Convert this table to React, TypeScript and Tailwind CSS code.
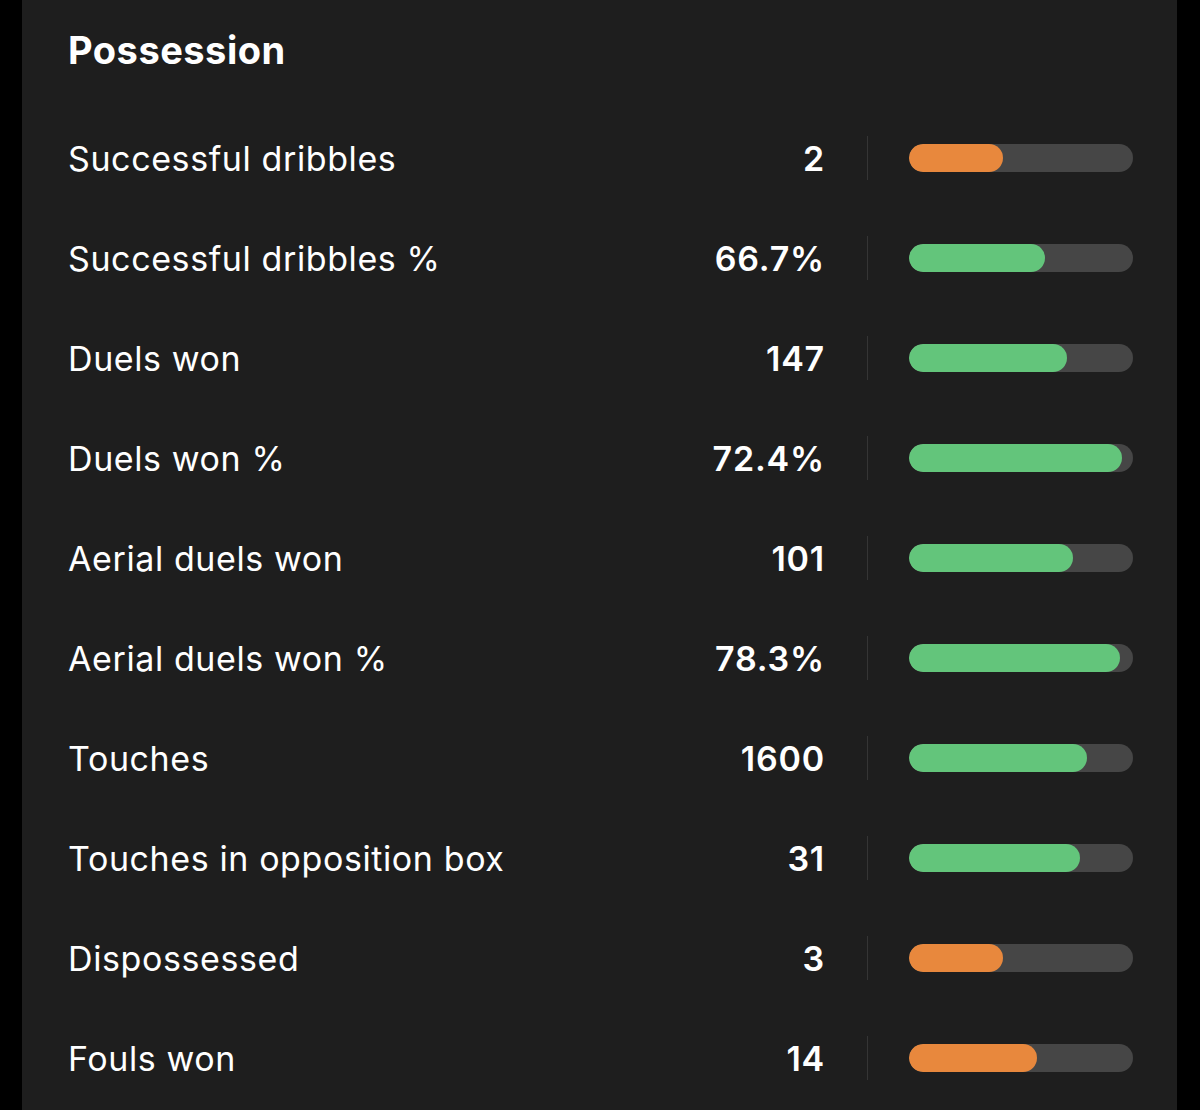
import React from 'react';

type Stat = { label: string; value: string; fill: number; good: boolean };

const stats: Stat[] = [
    { label: 'Successful dribbles', value: '2', fill: 94, good: false },
    { label: 'Successful dribbles %', value: '66.7%', fill: 136, good: true },
    { label: 'Duels won', value: '147', fill: 158, good: true },
    { label: 'Duels won %', value: '72.4%', fill: 213, good: true },
    { label: 'Aerial duels won', value: '101', fill: 164, good: true },
    { label: 'Aerial duels won %', value: '78.3%', fill: 211, good: true },
    { label: 'Touches', value: '1600', fill: 178, good: true },
    { label: 'Touches in opposition box', value: '31', fill: 171, good: true },
    { label: 'Dispossessed', value: '3', fill: 94, good: false },
    { label: 'Fouls won', value: '14', fill: 128, good: false },
];

const App = () => {
    return (
        <div className="w-[1200px] h-[1110px] bg-black flex overflow-hidden" style={{ fontFamily: 'Inter, "Noto Sans", sans-serif' }}>
            <div className="ml-[22px] w-[1155px] h-full bg-[#1e1e1e] pl-[46px] pr-[44px]">
                <div className="h-[108px] flex items-center pb-[8px]">
                    <h2 className="text-[38px] font-bold text-white tracking-[0.5px]">Possession</h2>
                </div>
                {stats.map((s) => (
                    <div key={s.label} className="h-[100px] flex items-center">
                        <div className="flex-1 text-[34px] text-white tracking-[0.6px]">{s.label}</div>
                        <div className="text-[34px] font-semibold text-white text-right tracking-[0.8px] -mr-[2px]">{s.value}</div>
                        <div className="ml-[44px] w-px h-[44px] bg-[#353535]" />
                        <div className="ml-[41px] w-[224px] h-[28px] rounded-full bg-[#464646] overflow-hidden">
                            <div
                                className={s.good ? 'h-full rounded-full bg-[#63c57b]' : 'h-full rounded-full bg-[#e8883d]'}
                                style={{ width: s.fill }}
                            />
                        </div>
                    </div>
                ))}
            </div>
        </div>
    );
};

export default App;
